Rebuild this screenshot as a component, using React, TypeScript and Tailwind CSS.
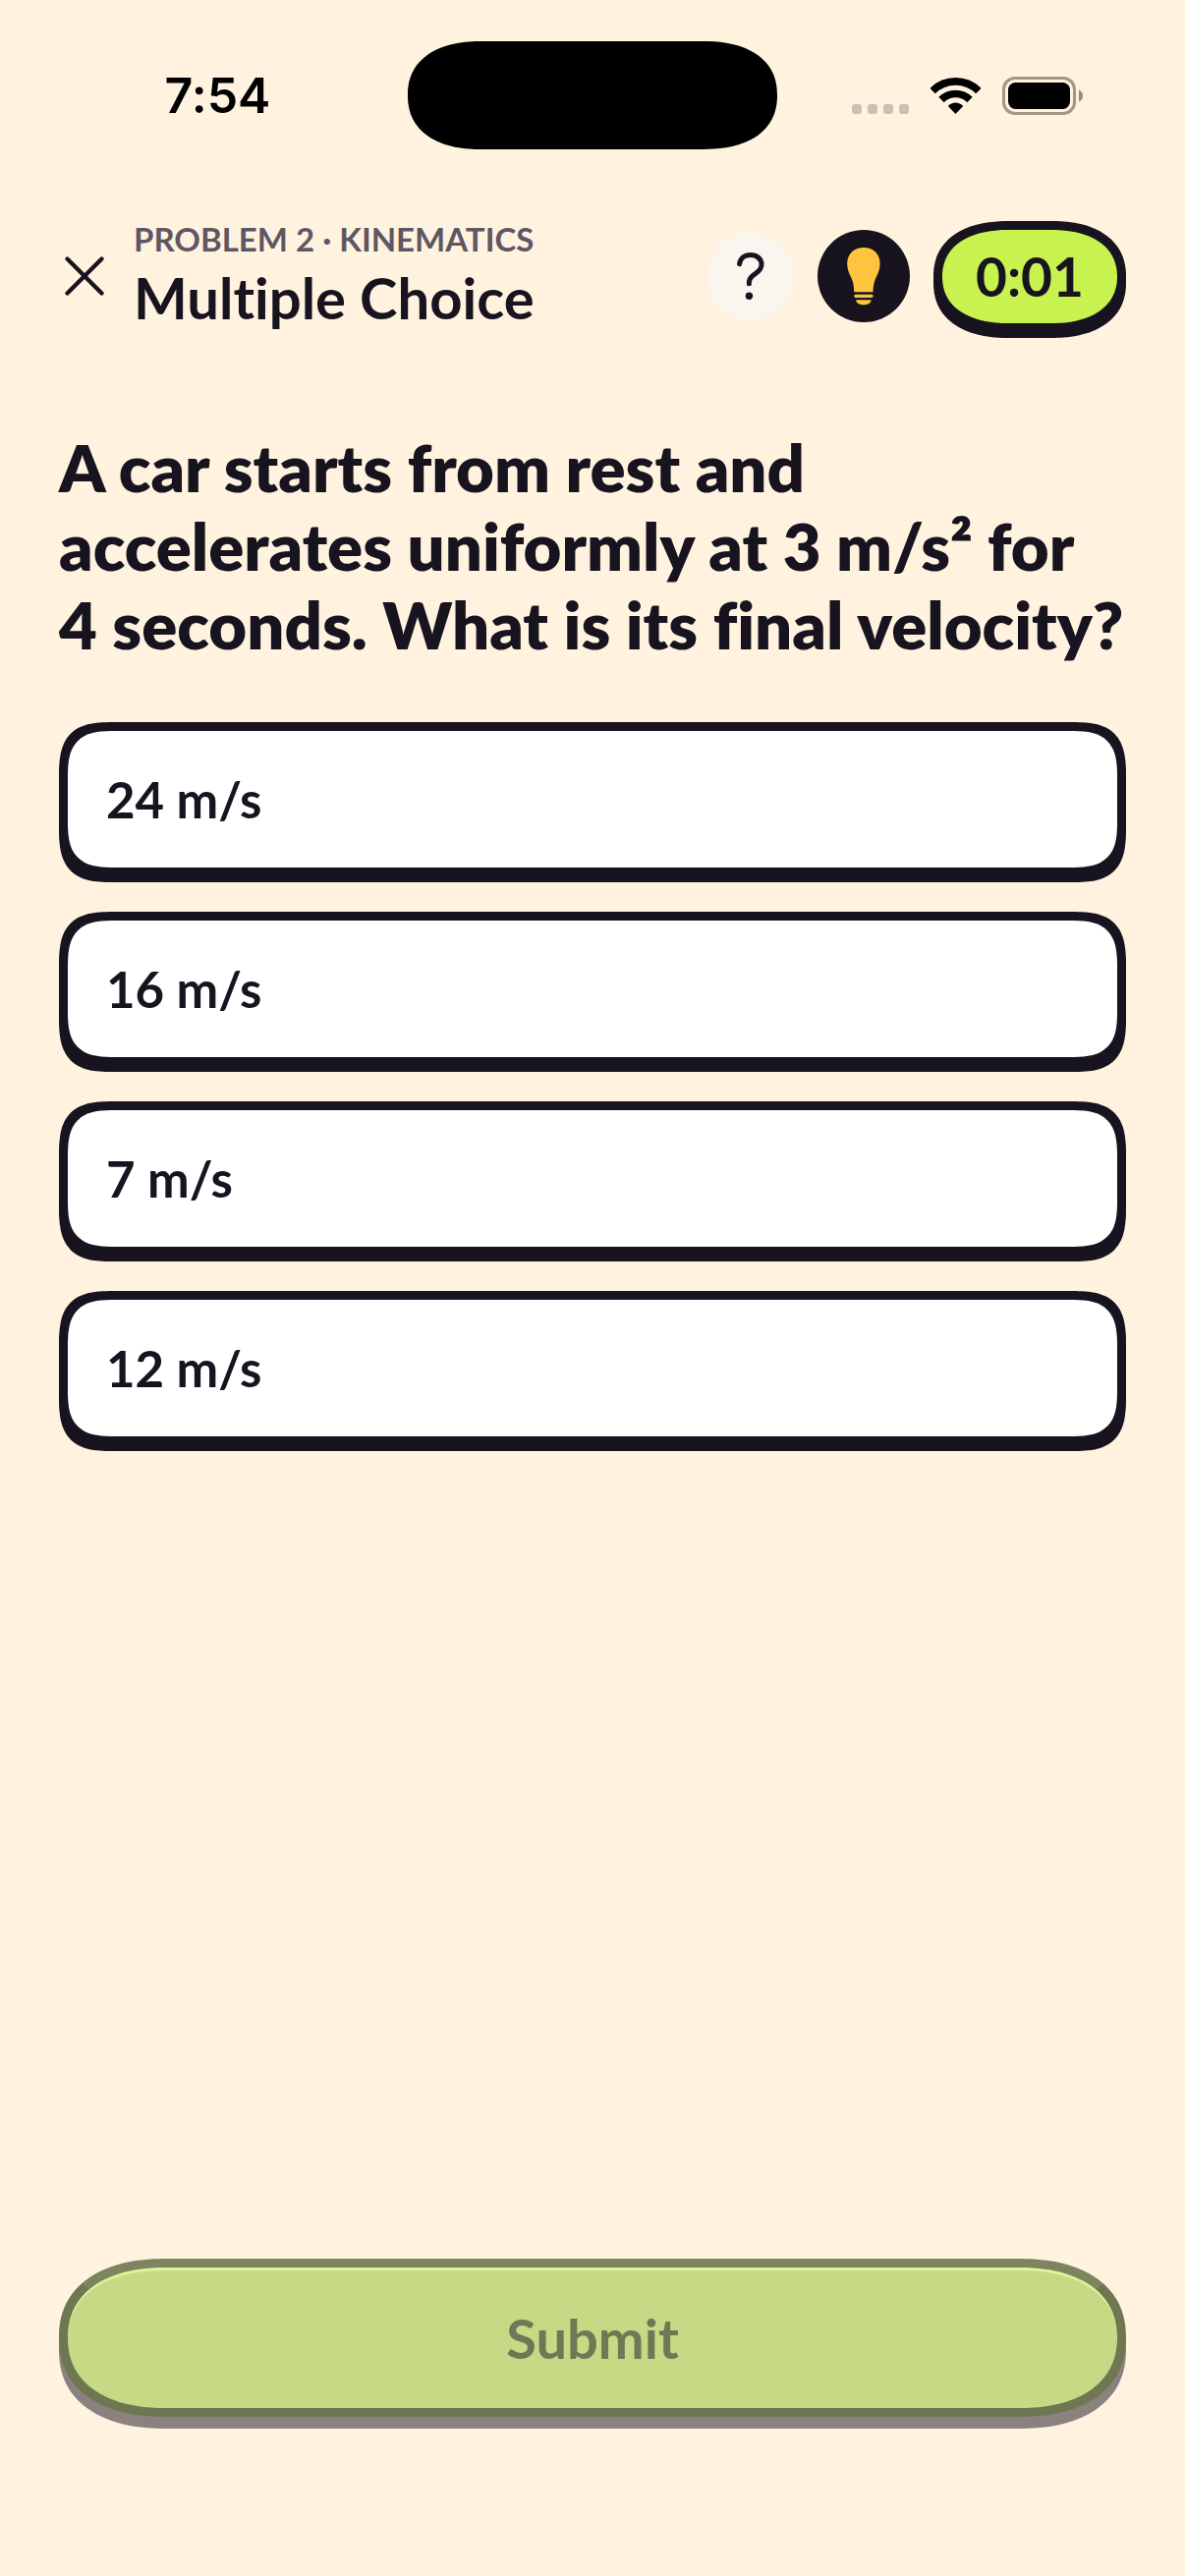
import { useState } from 'react';

const answers = ['24 m/s', '16 m/s', '7 m/s', '12 m/s'];

function SignalDots() {
  return (
    <svg width="58" height="39" viewBox="0 0 58 39" fill="#cbc0b3" aria-hidden="true">
      <rect x="0" y="28" width="10" height="10" rx="3" />
      <rect x="16" y="28" width="10" height="10" rx="3" />
      <rect x="32" y="28" width="10" height="10" rx="3" />
      <rect x="48" y="28" width="10" height="10" rx="3" />
    </svg>
  );
}

function WifiIcon() {
  return (
    <svg width="51" height="37" viewBox="0 0 51 37" fill="none" aria-hidden="true">
      <path d="M2.1 13.6A33.1 33.1 0 0 1 48.9 13.6" stroke="#000" strokeWidth="7.7" />
      <path d="M11 22.5A20.5 20.5 0 0 1 40 22.5" stroke="#000" strokeWidth="7.6" />
      <path d="M17.8 28.9C22 24.2 29 24.2 33.2 28.9L25.5 37Z" fill="#000" />
    </svg>
  );
}

function BatteryIcon() {
  return (
    <svg width="82" height="39" viewBox="0 0 82 39" fill="none" aria-hidden="true">
      <rect x="1.5" y="1.5" width="72" height="36" rx="11.5" stroke="#9d9888" strokeWidth="3" />
      <rect x="6" y="6" width="63" height="27" rx="7.5" fill="#000" />
      <path d="M78 13.5C80.5 14.5 82 16.7 82 19.5S80.5 24.5 78 25.5Z" fill="#8f8f74" />
    </svg>
  );
}

function CloseIcon() {
  return (
    <svg width="40" height="40" viewBox="0 0 40 40" fill="none" aria-hidden="true">
      <path d="M2.5 2.5L37.5 37.5M37.5 2.5L2.5 37.5" stroke="#18141f" strokeWidth="4.3" strokeLinecap="round" />
    </svg>
  );
}

function QuestionIcon() {
  return (
    <svg width="28" height="48" viewBox="0 0 28 48" fill="none" aria-hidden="true">
      <path
        d="M2.6 11.8C3.3 6 7.6 2.6 13.7 2.6C20.3 2.6 25 6.5 25 12.3C25 16.3 23 18.8 19 21.3C14.5 24.3 12.4 26.5 12.4 30.2V31.7"
        stroke="#18141f"
        strokeWidth="5"
        strokeLinecap="round"
        strokeLinejoin="round"
      />
      <circle cx="12.4" cy="44.2" r="3.7" fill="#18141f" />
    </svg>
  );
}

function BulbIcon() {
  return (
    <svg width="34" height="59" viewBox="0 0 34 59" fill="#ffc43d" aria-hidden="true">
      <path d="M17 0C7 0 .2 6.7 .2 16.5C.2 21.5 1.8 25.5 4 30C6.2 34.5 7 38.5 7.3 45.3H26.5C26.8 38.5 27.6 34.5 29.8 30C32 25.5 33.6 21.5 33.6 16.5C33.6 6.7 27 0 17 0Z" />
      <rect x="7.3" y="47.8" width="19.2" height="3.2" rx="1.4" />
      <path d="M9.3 53.2H24.5C24.5 56.5 21.5 58.3 16.9 58.3S9.3 56.5 9.3 53.2Z" />
    </svg>
  );
}

export default function App() {
  const [selected, setSelected] = useState<string | null>(null);

  return (
    <div className="min-h-screen flex flex-col bg-[#fff3e0] text-[#18141f] font-[Lato,sans-serif] [font-variant-ligatures:none]">
      <div className="flex items-center h-[194px]">
        <div className="flex-1 flex justify-center pl-7">
          <span className="font-[Inter,sans-serif] text-[50px] leading-[60px] font-semibold text-black">7:54</span>
        </div>
        <div className="w-[376px] h-[110px] bg-black rounded-[75px/55px] [corner-shape:superellipse(1.2)]" />
        <div className="flex-1 flex items-center justify-center gap-[22px] pr-7">
          <SignalDots />
          <WifiIcon />
          <BatteryIcon />
        </div>
      </div>

      <header className="flex items-center gap-6 px-[60px] mt-[27px]">
        <div className="flex-1 flex items-center gap-6">
          <button type="button" aria-label="Close" className="w-[52px] h-[60px] flex items-center justify-center">
            <CloseIcon />
          </button>
          <div>
            <p className="text-[33px] leading-[44px] font-bold text-[#5e5763]">PROBLEM 2 · KINEMATICS</p>
            <h1 className="text-[58px] leading-[76px] font-bold">Multiple Choice</h1>
          </div>
        </div>
        <button type="button" aria-label="Help" className="size-[88px] rounded-full bg-[#faf5ee] flex items-center justify-center">
          <QuestionIcon />
        </button>
        <button type="button" aria-label="Hint" className="size-[94px] rounded-full bg-[#18141f] flex items-center justify-center">
          <BulbIcon />
        </button>
        <div className="w-[196px] h-[113px] rounded-[77px/57px] [corner-shape:superellipse(1.2)] border-[9px] border-[#18141f] bg-[#c8f250] shadow-[0_6px_0_#18141f] flex items-center justify-center">
          <span className="text-[55px] leading-[60px] font-bold">0:01</span>
        </div>
      </header>

      <main className="flex-1 flex flex-col px-[60px] pb-[162px] mt-[94px]">
        <h2 className="text-[67px] leading-[80px] font-extrabold">
          A car starts from rest and accelerates uniformly at 3 m/s² for 4&nbsp;seconds. What is its final velocity?
        </h2>

        <div className="flex flex-col gap-9 mt-[60px]">
          {answers.map(answer => (
            <button
              key={answer}
              type="button"
              aria-pressed={selected === answer}
              onClick={() => setSelected(answer)}
              className="h-[157px] px-[39px] rounded-[58px] [corner-shape:superellipse(1.6)] border-[9px] border-[#18141f] bg-white shadow-[0_6px_0_#18141f] text-left text-[51px] leading-[60px] font-bold"
            >
              {answer}
            </button>
          ))}
        </div>

        <button
          type="submit"
          disabled={!selected}
          className="h-[161px] mt-auto rounded-[110px/81px] [corner-shape:superellipse(1.2)] border-[9px] border-[#6e7652] border-t-[#7c855f] bg-[#c6da86] shadow-[0_12px_0_#8b8280,inset_0_3px_0_#e1f59b] text-[56px] leading-[60px] font-bold text-[#6f7854]"
        >
          Submit
        </button>
      </main>
    </div>
  );
}
